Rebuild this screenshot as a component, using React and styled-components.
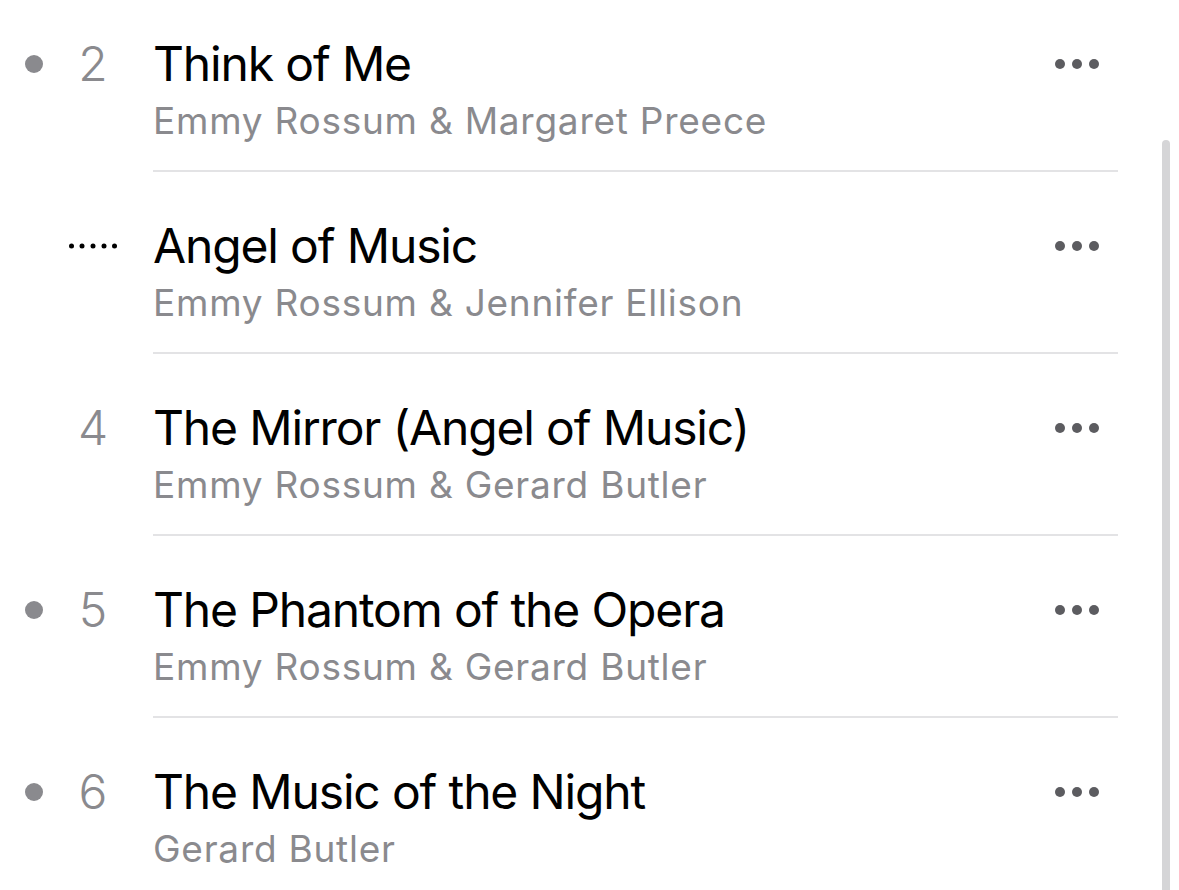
import styled, { createGlobalStyle } from 'styled-components';

const GlobalStyle = createGlobalStyle`
  html, body {
    margin: 0;
    padding: 0;
    background: #fff;
    overflow: hidden;
  }
  body {
    font-family: Inter, "Noto Sans", "Liberation Sans", sans-serif;
    -webkit-font-smoothing: antialiased;
  }
`;

const Screen = styled.div`
  position: relative;
  width: 1179px;
  height: 890px;
  overflow: hidden;
  background: #fff;
`;

const TrackList = styled.ul`
  list-style: none;
  margin: -10px 0 0;
  padding: 0;
`;

const Row = styled.li`
  display: flex;
  height: 182px;
`;

const Lead = styled.div`
  width: 153px;
  flex-shrink: 0;
  box-sizing: border-box;
  padding: 45px 0 0 25px;
  display: flex;
  align-items: flex-start;
`;

const LeadLine = styled.div`
  height: 58px;
  display: flex;
  align-items: center;
`;

const Bullet = styled.span`
  width: 18px;
  height: 18px;
  border-radius: 50%;
  background: ${p => (p.$on ? '#8a8a8e' : 'transparent')};
  margin-right: 26px;
`;

const TrackNo = styled.span`
  width: 48px;
  text-align: center;
  font-size: 48px;
  line-height: 58px;
  font-weight: 300;
  color: #8a8a8e;
  display: flex;
  justify-content: center;
  align-items: center;
`;

const Content = styled.div`
  flex: 1;
  margin-right: 61px;
  box-sizing: border-box;
  padding: 45px 19px 0 0;
  border-bottom: 2px solid ${p => (p.$last ? 'transparent' : '#e3e3e5')};
`;

const TitleLine = styled.div`
  display: flex;
  align-items: center;
  justify-content: space-between;
  height: 58px;
`;

const Title = styled.div`
  font-size: 48px;
  line-height: 58px;
  color: #000;
  letter-spacing: -1.15px;
  white-space: nowrap;
`;

const Artist = styled.div`
  margin-top: 6px;
  font-size: 37px;
  line-height: 44px;
  color: #8a8a8e;
  letter-spacing: 0.75px;
  white-space: nowrap;
`;

const MoreButton = styled.button`
  border: 0;
  background: none;
  padding: 0;
  display: flex;
  gap: 7px;
  cursor: pointer;
`;

const MoreDot = styled.span`
  width: 10px;
  height: 10px;
  border-radius: 50%;
  background: #5c5c60;
`;

const ScrollThumb = styled.div`
  position: absolute;
  left: 1162px;
  top: 140px;
  width: 8px;
  height: 780px;
  border-radius: 4px;
  background: #d5d5d7;
`;

const PlayingDots = () => (
  <svg width="48" height="8" viewBox="0 0 48 8">
    {[2.5, 13, 24, 35, 45.5].map(cx => (
      <circle key={cx} cx={cx} cy="4" r="2.5" fill="#000" />
    ))}
  </svg>
);

const tracks = [
  { no: 2, title: 'Think of Me', artist: 'Emmy Rossum & Margaret Preece', bullet: true },
  { no: 3, title: 'Angel of Music', artist: 'Emmy Rossum & Jennifer Ellison', playing: true },
  { no: 4, title: 'The Mirror (Angel of Music)', artist: 'Emmy Rossum & Gerard Butler' },
  { no: 5, title: 'The Phantom of the Opera', artist: 'Emmy Rossum & Gerard Butler', bullet: true },
  { no: 6, title: 'The Music of the Night', artist: 'Gerard Butler', bullet: true },
];

export default function App() {
  return (
    <Screen>
      <GlobalStyle />
      <TrackList>
        {tracks.map((t, i) => (
          <Row key={t.no}>
            <Lead>
              <LeadLine>
                <Bullet $on={t.bullet} />
                <TrackNo>{t.playing ? <PlayingDots /> : t.no}</TrackNo>
              </LeadLine>
            </Lead>
            <Content $last={i === tracks.length - 1}>
              <TitleLine>
                <Title>{t.title}</Title>
                <MoreButton aria-label="More">
                  <MoreDot />
                  <MoreDot />
                  <MoreDot />
                </MoreButton>
              </TitleLine>
              <Artist>{t.artist}</Artist>
            </Content>
          </Row>
        ))}
      </TrackList>
      <ScrollThumb />
    </Screen>
  );
}
